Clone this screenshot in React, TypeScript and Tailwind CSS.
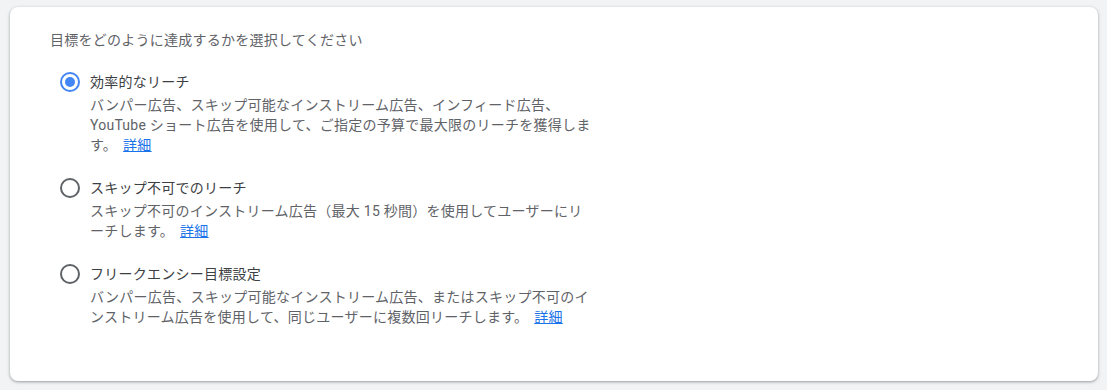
import React from "react";

type Opt = { label: string; lines: React.ReactNode[]; checked?: boolean };

const Link = () => (
  <a href="#" className="text-[#1a73e8] underline ml-[6px]">
    詳細
  </a>
);

const options: Opt[] = [
  {
    label: "効率的なリーチ",
    checked: true,
    lines: [
      "バンパー広告、スキップ可能なインストリーム広告、インフィード広告、",
      "YouTube ショート広告を使用して、ご指定の予算で最大限のリーチを獲得しま",
      <>
        す。
        <Link />
      </>,
    ],
  },
  {
    label: "スキップ不可でのリーチ",
    lines: [
      "スキップ不可のインストリーム広告（最大 15 秒間）を使用してユーザーにリ",
      <>
        ーチします。
        <Link />
      </>,
    ],
  },
  {
    label: "フリークエンシー目標設定",
    lines: [
      "バンパー広告、スキップ可能なインストリーム広告、またはスキップ不可のイ",
      <>
        ンストリーム広告を使用して、同じユーザーに複数回リーチします。
        <Link />
      </>,
    ],
  },
];

function Radio({ checked }: { checked?: boolean }) {
  return (
    <div
      className={
        checked
          ? "w-5 h-5 rounded-full border-2 border-[#4285f4] flex items-center justify-center shrink-0"
          : "w-5 h-5 rounded-full border-2 border-[#5f6368] flex items-center justify-center shrink-0"
      }
    >
      {checked && <div className="w-[10px] h-[10px] rounded-full bg-[#4285f4]" />}
    </div>
  );
}

export default function App() {
  return (
    <div
      className="w-[1107px] h-[390px] bg-[#f1f3f4] pt-[7px] pl-[10px] pr-[9px] tracking-[0.25px]"
      style={{ fontFamily: 'Roboto, "Noto Sans CJK JP", sans-serif' }}
    >
      <div className="h-[374px] bg-white rounded-lg shadow-[0_1px_2px_rgba(60,64,67,0.3),0_1px_3px_1px_rgba(60,64,67,0.15)] pt-[23px] pl-[40px]">
        <div className="text-[14px] leading-[20px] text-[#5f6368]">
          目標をどのように達成するかを選択してください
        </div>
        <div className="mt-[22px] ml-[10px] flex flex-col gap-[23px]">
          {options.map((o, i) => (
            <div key={i} className="flex flex-col">
              <label className="flex items-center gap-[10px] h-5">
                <Radio checked={o.checked} />
                <span className="text-[14px] leading-[20px] text-[#3c4043]">{o.label}</span>
              </label>
              <div className="mt-[3px] ml-[30px] text-[14px] leading-[20px] text-[#5f6368] whitespace-nowrap">
                {o.lines.map((l, j) => (
                  <div key={j}>{l}</div>
                ))}
              </div>
            </div>
          ))}
        </div>
      </div>
    </div>
  );
}
